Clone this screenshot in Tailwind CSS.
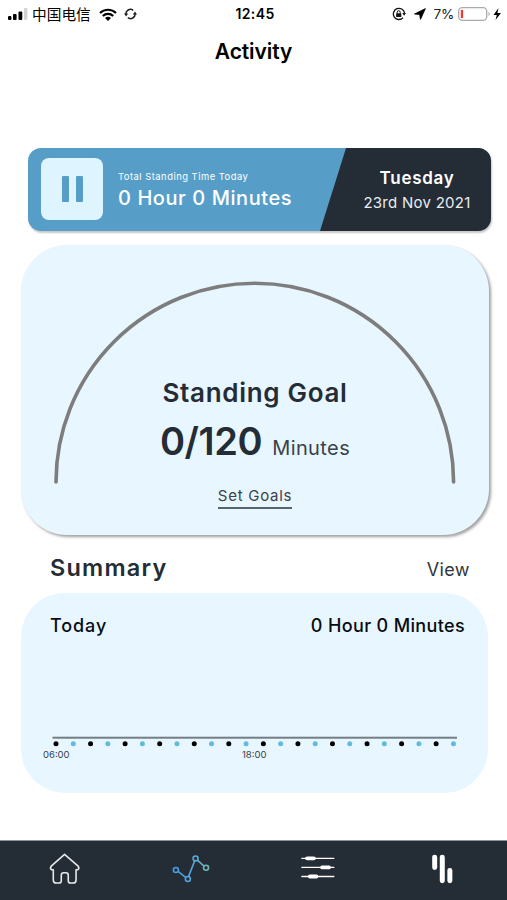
<!DOCTYPE html>
<html lang="en">
<head>
<meta charset="utf-8">
<title>Activity</title>
<script src="https://cdn.jsdelivr.net/npm/@tailwindcss/browser@4"></script>
</head>
<body class="bg-white">
<div class="flex h-[900px] w-[507px] flex-col overflow-hidden bg-white font-[Inter,'Noto_Sans_CJK_SC',sans-serif] whitespace-nowrap text-[#242c35]">
  <header class="grid h-7 shrink-0 grid-cols-[1fr_auto_1fr] items-center pr-[5px] pl-2 text-black">
    <div class="flex items-center">
      <svg class="h-[12px] w-[20px]" viewBox="0 0 20 12"><rect y="8" width="3.4" height="4" rx="1"/><rect x="5" y="6" width="3.6" height="6" rx="1"/><rect x="10.5" y="3.5" width="3.8" height="8.5" rx="1"/><rect x="16" width="3.4" height="12" rx="1" fill="#d2d2d2"/></svg>
      <span class="ml-1 font-['Noto_Sans_CJK_SC',sans-serif] text-[14.7px] leading-7">中国电信</span>
      <svg class="ml-2 h-[13px] w-[18px]" viewBox="0 0 18 13" fill="none" stroke="#000" stroke-width="2.2"><path d="M1 5A11.5 11.5 0 0 1 17 5M3.8 8A7.5 7.5 0 0 1 14.2 8"/><path d="M9 13L6 10Q9 7.6 12 10Z" fill="#000" stroke="none"/></svg>
      <svg class="ml-[7px] h-[12px] w-[13px]" viewBox="0 0 13 12" fill="none" stroke="#222" stroke-width="1.5"><path d="M1.9 6.5A4.6 4.6 0 0 1 9.2 2.3M11.1 5.5A4.6 4.6 0 0 1 3.8 9.7"/><path d="M0 5.6L4.2 5.6L2.1 8.4ZM8.8 6.4L11 3.6L13 6.4Z" fill="#222" stroke="none"/></svg>
    </div>
    <span class="text-[14px] leading-7 font-semibold tracking-[0.4px]">12:45</span>
    <div class="flex items-center justify-end">
      <svg class="h-[14px] w-[14px]" viewBox="0 0 14 14" fill="none" stroke="#111" stroke-width="1.3"><path d="M11 10.8A5.6 5.6 0 1 1 12.5 6"/><path d="M10.3 6L14 6L12.1 8.7Z" fill="#111" stroke="none"/><rect x="4.1" y="6.3" width="5.2" height="3.8" rx=".5" fill="#111" stroke="none"/><path d="M5.2 6.5V5.2A1.5 1.5 0 0 1 8.2 5.2V6.5" stroke-width="1"/></svg>
      <svg class="ml-[8px] h-[12px] w-[12px]" viewBox="0 0 12 12" stroke="#000" stroke-width=".8" stroke-linejoin="round"><path d="M11.4 .6L.5 6L5.6 6.5L6.5 11.4Z"/></svg>
      <span class="ml-[8px] text-[13.6px] leading-7 tracking-[-0.3px] text-[#222]">7%</span>
      <svg class="ml-[4px] h-[14px] w-[44px]" viewBox="0 0 44 14"><rect x=".7" y=".7" width="28" height="12.6" rx="3.5" fill="#fff" stroke="#aaa" stroke-width="1.3"/><path d="M30.5 4.8Q33 7 30.5 9.2Z" fill="#aaa"/><rect x="2.8" y="2.7" width="2.3" height="8.6" rx=".8" fill="#f23b30"/><path d="M40.5 1L35.5 8H38.8L37.5 13L43 6H39.4Z"/></svg>
    </div>
  </header>
  <h1 class="mt-[8px] h-8 text-center text-[21px] leading-8 font-semibold tracking-[-0.1px] text-black">Activity</h1>

  <section class="mt-[80px] mr-[16px] ml-[28px] flex h-[83px] shrink-0 overflow-hidden rounded-[13px] bg-[#569ec8] shadow-[1px_2px_2px_#00000038]">
    <div class="ml-[13px] mt-[10px] flex size-[62px] shrink-0 items-center justify-center gap-[7px] rounded-[8px] bg-[#def4ff]">
      <span class="h-[26px] w-[7px] rounded-[1px] bg-[#569ec8]"></span>
      <span class="h-[26px] w-[7px] rounded-[1px] bg-[#569ec8]"></span>
    </div>
    <div class="ml-[15px] flex w-[202px] shrink-0 flex-col pt-[21px] text-white">
      <span class="text-[9.4px] leading-[16px] tracking-[0.5px]">Total Standing Time Today</span>
      <span class="text-[20px] leading-[26px] font-medium tracking-[0.57px]">0 Hour 0 Minutes</span>
    </div>
    <div class="flex flex-1 flex-col items-center bg-[#242c35] pt-[18px] pl-[23px] text-white [clip-path:polygon(26px_0,100%_0,100%_100%,0_100%)]">
      <span class="text-[17px] leading-[24px] font-semibold tracking-[0.7px]">Tuesday</span>
      <span class="text-[15px] leading-[25px] tracking-[0.27px] text-[#e9edf2]">23rd Nov 2021</span>
    </div>
  </section>

  <section class="mt-[14px] ml-[21px] grid h-[290px] w-[468px] shrink-0 rounded-[46px] bg-[#e8f6ff] shadow-[2px_2px_3px_#00000060]">
    <svg class="col-start-1 row-start-1 mt-[35px] ml-[32px] h-[206px] w-[405px]" viewBox="0 0 405 206"><path d="M3 202A198.8 198.8 0 0 1 400.6 202" fill="none" stroke="#7d7d7d" stroke-width="3.6" stroke-linecap="round"/></svg>
    <div class="col-start-1 row-start-1 flex flex-col items-center pt-[132px]">
      <h2 class="text-[26px] leading-[32px] font-semibold tracking-[0.7px]">Standing Goal</h2>
      <div class="mt-[7px] flex items-baseline leading-[50px]">
        <span class="text-[38px] font-semibold tracking-[-0.4px]">0/120</span>
        <span class="ml-[10px] text-[20px] tracking-[0.4px] text-[#3a424a]">Minutes</span>
      </div>
      <a class="mt-[19px] h-[24px] -translate-y-[7px] border-b-2 border-[#59636b] text-[15px] leading-[22px] tracking-[0.72px] text-[#3a424a]">Set Goals</a>
    </div>
  </section>

  <div class="mt-[17px] mr-[37px] ml-[50px] flex h-[32px] shrink-0 items-baseline justify-between leading-[32px]">
    <h2 class="text-[23.5px] font-semibold tracking-[1.2px]">Summary</h2>
    <a class="text-[18px] tracking-[0.4px] text-[#30363d]">View</a>
  </div>

  <section class="mt-[9px] ml-[21px] h-[200px] w-[467px] shrink-0 rounded-[44px] bg-[#e8f6ff] pt-[19px]">
    <div class="mr-[23px] ml-[29px] flex h-[28px] justify-between text-[18px] leading-[28px] font-medium text-[#080c10]">
      <span class="tracking-[0.9px]">Today</span><span class="tracking-[0.35px]">0 Hour 0 Minutes</span>
    </div>
    <svg class="mt-[95px] ml-[30px] h-[14px] w-[410px]" viewBox="0 0 410 14">
      <rect x="1.5" y="1.7" width="404.5" height="2" fill="#737d85"/>
      <g fill="none" stroke-width="5" stroke-linecap="round"><path d="M5 8.7H403" stroke="#000" stroke-dasharray="0 34.56"/><path d="M22.3 8.7H403" stroke="#62bbdf" stroke-dasharray="0 34.56"/></g>
    </svg>
    <div class="-mt-px ml-[22px] flex gap-[171px] text-[9.5px] leading-[13px] text-[#38424a]"><span class="w-[28px]">06:00</span><span>18:00</span></div>
  </section>

  <nav class="mt-auto grid h-[60px] shrink-0 grid-cols-4 border-t border-[#89939a] bg-[#242c35]">
    <svg class="h-[59px] w-full" viewBox="0 841 127 59" fill="none" stroke="#e6e8ea" stroke-width="1.6" stroke-linejoin="round"><path d="M64.7 854.4L51.3 866.2Q49.8 868.4 51.5 869.7H53.4V880Q53.4 883.1 56.5 883.1H59.4Q61.4 883.1 61.4 880.8V875.2Q61.4 872.7 63.8 872.7H66Q68.4 872.7 68.4 875.2V880.8Q68.4 883.1 70.4 883.1H73.1Q76.2 883.1 76.2 880V869.7H78Q79.8 868.4 78.3 866.2Z"/></svg>
    <svg class="h-[59px] w-full" viewBox="127 841 127 59" fill="none" stroke-width="1.6"><defs><linearGradient id="trend" gradientUnits="userSpaceOnUse" x1="173" y1="0" x2="210" y2="0"><stop stop-color="#429be6"/><stop offset=".55" stop-color="#55a8da"/><stop offset="1" stop-color="#76b8ad"/></linearGradient></defs><g stroke="url(#trend)"><path d="M178.2 871.3L185.8 877.4M188.7 876.4L194.8 860.9M197.5 860.1L204.2 866.1"/><circle cx="176" cy="870" r="2.5"/><circle cx="188" cy="879" r="2.5"/><circle cx="195.7" cy="858.4" r="2.5"/><circle cx="206.2" cy="867.8" r="2.5"/></g></svg>
    <svg class="h-[59px] w-full" viewBox="253.5 841 127 59" stroke="#fff" stroke-linecap="round"><path d="M301.5 858.3H333.5M301.5 867.4H333.5M301.5 876.5H333.5" stroke-width="1.4"/><path d="M306.7 858.3H313.5M321.7 867.4H328.7M309.5 876.5H316" stroke-width="3.8"/></svg>
    <svg class="h-[59px] w-full" viewBox="380 841 127 59" fill="none" stroke="#fff" stroke-width="5" stroke-linecap="round"><path d="M434.8 857.2V867.5M442.4 857.2V880.7M450 870.5V880.7"/></svg>
  </nav>
</div>
</body>
</html>
